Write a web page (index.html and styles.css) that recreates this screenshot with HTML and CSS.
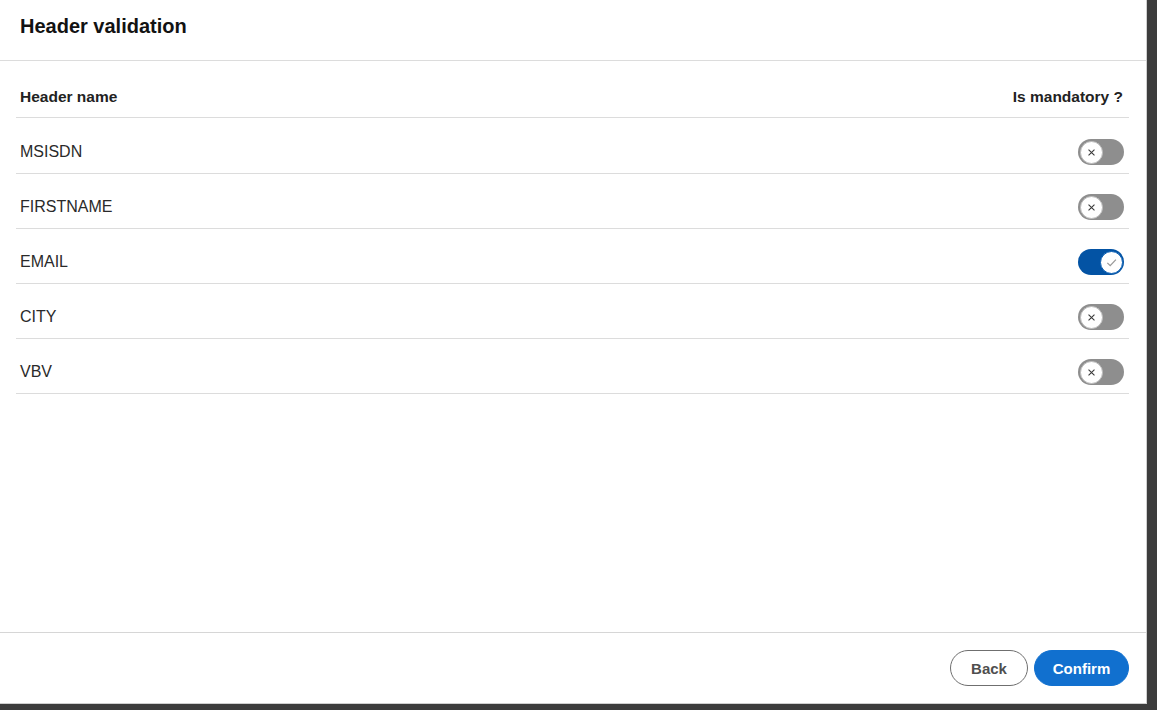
FILE: index.html
```html
<!DOCTYPE html>
<html>
<head>
<meta charset="utf-8">
<link rel="stylesheet" href="styles.css">
</head>
<body>
<div class="modal">
  <div class="modal-header"><h1 class="title">Header validation</h1></div>
  <div class="modal-body">
    <div class="row head-row">
      <span class="col-name">Header name</span>
      <span class="col-mand">Is mandatory ?</span>
    </div>
    <div class="row first">
      <span class="cell">MSISDN</span>
      <span class="toggle"><span class="knob"><svg viewBox="0 0 10 10" class="ico"><path d="M2.3 2.3L7.7 7.7M7.7 2.3L2.3 7.7" /></svg></span></span>
    </div>
    <div class="row">
      <span class="cell">FIRSTNAME</span>
      <span class="toggle"><span class="knob"><svg viewBox="0 0 10 10" class="ico"><path d="M2.3 2.3L7.7 7.7M7.7 2.3L2.3 7.7" /></svg></span></span>
    </div>
    <div class="row">
      <span class="cell">EMAIL</span>
      <span class="toggle on"><span class="knob"><svg viewBox="0 0 10 10" class="ico check"><path d="M1.8 5.3L4 7.4L8.4 2.8" /></svg></span></span>
    </div>
    <div class="row">
      <span class="cell">CITY</span>
      <span class="toggle"><span class="knob"><svg viewBox="0 0 10 10" class="ico"><path d="M2.3 2.3L7.7 7.7M7.7 2.3L2.3 7.7" /></svg></span></span>
    </div>
    <div class="row">
      <span class="cell">VBV</span>
      <span class="toggle"><span class="knob"><svg viewBox="0 0 10 10" class="ico"><path d="M2.3 2.3L7.7 7.7M7.7 2.3L2.3 7.7" /></svg></span></span>
    </div>
  </div>
  <div class="modal-footer">
    <button class="btn btn-back">Back</button>
    <button class="btn btn-confirm">Confirm</button>
  </div>
</div>
</body>
</html>
```
FILE: styles.css
```css
html, body {
  margin: 0;
  padding: 0;
  height: 100%;
}
body {
  background: #3c3c3c;
  font-family: "Liberation Sans", Arial, sans-serif;
  overflow: hidden;
}
.modal {
  width: 1146px;
  height: 703px;
  background: #fff;
  border-right: 1px solid #cfcfcf;
  border-bottom: 1px solid #cfcfcf;
  display: flex;
  flex-direction: column;
}
.modal-header {
  height: 60px;
  border-bottom: 1px solid #dcdcdc;
  padding-left: 20px;
  display: flex;
  align-items: center;
}
.title {
  margin: 0;
  font-size: 20px;
  font-weight: 700;
  color: #121212;
  position: relative;
  top: -4px;
}
.modal-body {
  flex: 1;
  padding: 0 17px 0 16px;
}
.row {
  display: flex;
  align-items: center;
  justify-content: space-between;
  height: 55px;
  padding: 12px 5px 0 4px;
  box-sizing: border-box;
  border-bottom: 1px solid #dcdcdc;
}
.row.first {
  height: 56px;
  padding-top: 13px;
}
.head-row {
  height: 57px;
  padding-top: 15px;
}
.col-name, .col-mand {
  font-size: 15.5px;
  font-weight: 700;
  color: #222;
}
.col-mand {
  margin-right: 1px;
}
.cell {
  font-size: 16px;
  color: #2a2a2a;
}
.toggle {
  width: 46px;
  height: 26px;
  border-radius: 13px;
  background: #8e8e8e;
  display: flex;
  align-items: center;
  padding: 0 1.5px;
  box-sizing: border-box;
}
.toggle.on {
  background: #0353a4;
  justify-content: flex-end;
}
.knob {
  width: 23px;
  height: 23px;
  border-radius: 50%;
  background: #fff;
  border: 1px solid #bcbcbc;
  box-sizing: border-box;
  display: flex;
  align-items: center;
  justify-content: center;
}
.toggle.on .knob {
  border-color: #0a5fb4;
}
.ico {
  width: 11px;
  height: 11px;
  fill: none;
  stroke: #3a3a3a;
  stroke-width: 1;
}
.ico.check {
  width: 13px;
  height: 13px;
  stroke: #9a9a9a;
}
.modal-footer {
  border-top: 1px solid #d6d6d6;
  height: 70px;
  display: flex;
  align-items: center;
  justify-content: flex-end;
  gap: 6px;
  padding-right: 17px;
}
.btn {
  height: 36px;
  border-radius: 18px;
  font-family: "Liberation Sans", Arial, sans-serif;
  font-size: 15px;
  font-weight: 700;
  cursor: pointer;
}
.btn-back {
  width: 78px;
  background: #fff;
  border: 1px solid #6f6f6f;
  color: #4f4f4f;
}
.btn-confirm {
  width: 95px;
  background: #1170cf;
  border: 1px solid #1170cf;
  color: #fff;
}
```
